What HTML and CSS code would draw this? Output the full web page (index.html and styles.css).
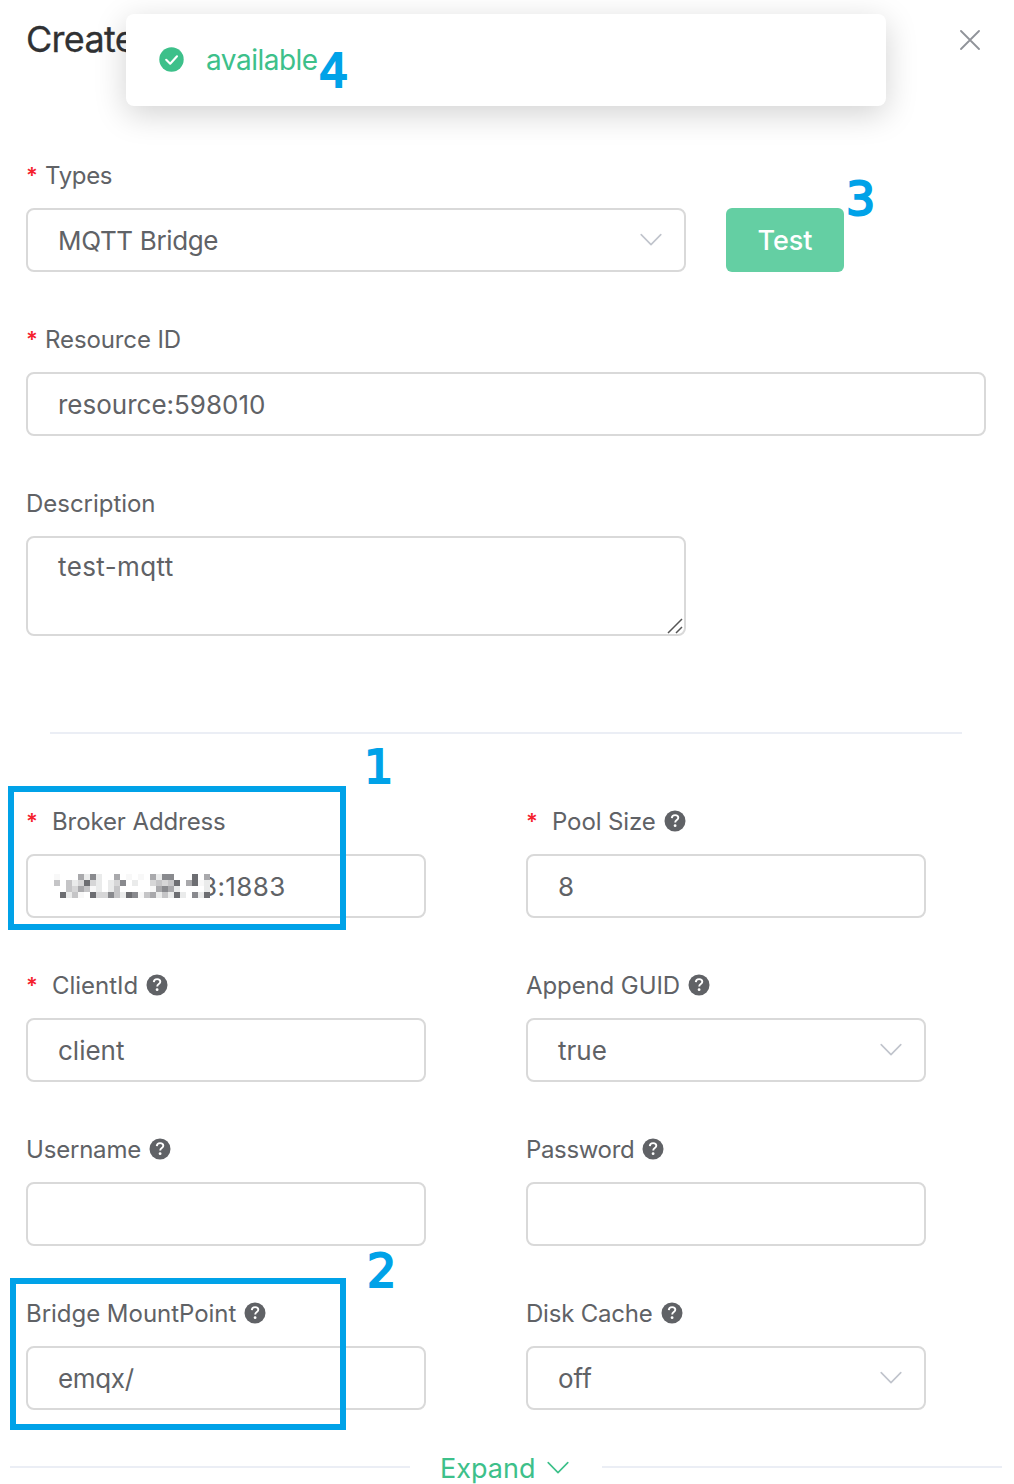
FILE: index.html
```
<!DOCTYPE html>
<html lang="en">
<head>
<meta charset="utf-8">
<title>Create</title>
<link rel="stylesheet" href="styles.css">
</head>
<body>
<svg width="0" height="0" class="defs">
  <defs>
    <symbol id="help" viewBox="0 0 22 22">
      <circle cx="11" cy="11" r="10.5" fill="#606266"/>
      <path d="M7.8 8.1C7.9 6.2 9.2 5.1 11.1 5.1C13 5.1 14.3 6.2 14.3 7.8C14.3 10.2 11.2 10 11.2 12.5" fill="none" stroke="#fff" stroke-width="1.9"/>
      <circle cx="11.1" cy="15.7" r="1.4" fill="#fff"/>
    </symbol>
    <symbol id="chevron" viewBox="0 0 22 14">
      <path d="M1.2 1.6L11 11.6L20.8 1.6" fill="none" stroke="currentColor" stroke-width="1.6" stroke-linecap="round" stroke-linejoin="round"/>
    </symbol>
  </defs>
</svg>
<main class="dialog">
  <header class="header">
    <h1 class="title">Create</h1>
    <svg class="close" viewBox="0 0 20 20"><path d="M1 1L19 19M19 1L1 19" fill="none" stroke="#909399" stroke-width="1.8" stroke-linecap="round"/></svg>
  </header>

  <section class="basics">
    <div class="field">
      <div class="label"><span class="star">*</span><span class="tight">Types</span></div>
      <div class="row">
        <div class="control medium"><span class="tight">MQTT Bridge</span><svg class="arrow"><use href="#chevron"/></svg></div>
        <button class="test">Test</button>
      </div>
    </div>
    <div class="field">
      <div class="label"><span class="star">*</span><span>Resource ID</span></div>
      <div class="control"><span>resource:598010</span></div>
    </div>
    <div class="field">
      <div class="label"><span class="even">Description</span></div>
      <div class="control medium area"><span class="loose">test-mqtt</span>
        <svg class="grip" viewBox="0 0 16 16"><path d="M1 15L15 1M9 15L15 9" stroke="#555" stroke-width="1.5" fill="none"/></svg>
      </div>
    </div>
  </section>

  <hr class="divider">

  <section class="grid">
    <div class="field">
      <div class="label wide"><span class="star">*</span><span>Broker Address</span></div>
      <div class="control address"><span class="loose">3:1883</span>
        <svg class="mosaic" viewBox="0 0 26 4" shape-rendering="crispEdges">
          <path fill="#fff" d="M0 0h26v4H0z"/>
          <path fill="#6d6e72" d="M5 1h1v1h-1zM23 0h1v2h-1zM1 3h1v1h-1zM12 3h1v1h-1zM6 3h1v1h-1zM20 3h1v1h-1zM25 3h1v1h-1zM20 1h1v1h-1z"/>
          <path fill="#898a8e" d="M6 0h1v1h-1zM11 1h1v1h-1zM18 0h2v1h-2zM18 2h1v1h-1zM9 3h1v1h-1zM13 3h1v1h-1zM23 3h1v1h-1z"/>
          <path fill="#a9a9ac" d="M4 0h1v1h-1zM10 0h1v1h-1zM16 0h1v1h-1zM25 0h1v1h-1zM4 2h1v1h-1zM17 2h1v1h-1zM19 2h1v1h-1zM16 3h1v1h-1zM22 1h1v1h-1z"/>
          <path fill="#c5c5c7" d="M0 1h1v1h-1zM17 1h1v1h-1zM19 1h1v1h-1zM5 2h1v1h-1zM10 2h1v1h-1zM3 3h1v1h-1zM10 3h1v1h-1zM15 3h1v1h-1zM18 3h1v1h-1zM2 1h1v2h-1z"/>
          <path fill="#d6d6d7" d="M4 1h1v1h-1zM6 1h1v1h-1zM16 1h1v1h-1zM18 1h1v1h-1zM3 2h1v1h-1zM7 3h2v1h-2zM10 1h1v1h-1z"/>
          <path fill="#eaebeb" d="M5 0h1v1h-1zM7 0h1v3h-1zM17 0h1v1h-1zM3 1h1v1h-1zM9 1h1v2h-1zM13 1h1v1h-1zM25 1h1v2h-1zM20 2h1v1h-1zM2 3h1v1h-1zM11 3h1v1h-1zM17 3h1v1h-1zM19 3h1v1h-1zM21 3h1v1h-1zM24 3h1v1h-1z"/>
          <path fill="#f8f8f8" d="M0 0h1v1h-1zM12 0h1v1h-1zM14 0h1v1h-1zM24 1h1v1h-1zM6 2h1v1h-1zM16 2h1v1h-1zM4 3h1v1h-1zM14 3h1v1h-1z"/>
        </svg>
      </div>
    </div>
    <div class="field">
      <div class="label wide"><span class="star">*</span><span>Pool Size</span><svg class="help"><use href="#help"/></svg></div>
      <div class="control"><span>8</span></div>
    </div>
    <div class="field">
      <div class="label wide"><span class="star">*</span><span class="even">ClientId</span><svg class="help"><use href="#help"/></svg></div>
      <div class="control"><span>client</span></div>
    </div>
    <div class="field">
      <div class="label"><span>Append GUID</span><svg class="help"><use href="#help"/></svg></div>
      <div class="control"><span>true</span><svg class="arrow"><use href="#chevron"/></svg></div>
    </div>
    <div class="field">
      <div class="label"><span class="snug">Username</span><svg class="help"><use href="#help"/></svg></div>
      <div class="control"></div>
    </div>
    <div class="field">
      <div class="label"><span class="tight">Password</span><svg class="help"><use href="#help"/></svg></div>
      <div class="control"></div>
    </div>
    <div class="field">
      <div class="label"><span class="even">Bridge MountPoint</span><svg class="help"><use href="#help"/></svg></div>
      <div class="control"><span class="tight">emqx/</span></div>
    </div>
    <div class="field">
      <div class="label"><span class="snug">Disk Cache</span><svg class="help"><use href="#help"/></svg></div>
      <div class="control"><span>off</span><svg class="arrow"><use href="#chevron"/></svg></div>
    </div>
  </section>

  <div class="expand"><span class="rule"></span><span class="expand-text">Expand</span><svg class="expand-arrow"><use href="#chevron"/></svg><span class="rule"></span></div>

  <div class="toast">
    <svg class="ok" viewBox="0 0 25 25"><circle cx="12.5" cy="12.5" r="12.2" fill="#3dc08a"/><path d="M7.2 12.8L11.2 16.7L18 9.3" fill="none" stroke="#fff" stroke-width="2.1" stroke-linecap="round" stroke-linejoin="round"/></svg>
    <span class="toast-text">available</span>
  </div>

  <div class="mark mark-address"></div>
  <div class="mark mark-mount"></div>
  <span class="num n1">1</span>
  <span class="num n2">2</span>
  <span class="num n3">3</span>
  <span class="num n4">4</span>
</main>
</body>
</html>
```
FILE: styles.css
```
* { box-sizing: border-box; }
body {
  margin: 0;
  background: #fff;
  color: #606266;
  font-family: Inter, "Liberation Sans", sans-serif;
  font-size: 26px;
}
.defs { position: absolute; }
.dialog { position: relative; width: 1014px; height: 1484px; overflow: hidden; }
.header {
  display: flex;
  justify-content: space-between;
  align-items: center;
  height: 80px;
  padding: 0 34px 0 26px;
}
.title { margin: -2px 0 0; font-size: 36px; font-weight: 400; letter-spacing: -.7px; color: #303133; -webkit-text-stroke: .3px #303133; }
.close { width: 20px; height: 20px; }

.basics { display: flex; flex-direction: column; gap: 36px; padding: 64px 28px 0 26px; }
.label { display: flex; align-items: center; height: 64px; padding-bottom: 2px; font-size: 24px; letter-spacing: -.1px; }
.label .even { letter-spacing: -.03px; }
.label .snug { letter-spacing: -.2px; }
.label .tight, .control .tight { letter-spacing: -.35px; }
.loose { letter-spacing: .4px; }
.star { width: 19px; color: #f5222d; font-size: 22px; font-weight: 600; }
.wide .star { width: 26px; }
.help { width: 22px; height: 22px; margin-left: 8px; }
.row { display: flex; gap: 40px; }
.control {
  position: relative;
  display: flex;
  align-items: center;
  justify-content: space-between;
  height: 64px;
  padding: 0 22px 0 30px;
  border: 2px solid #d9d9d9;
  border-radius: 8px;
  background: #fff;
}
.medium { width: 660px; }
.area { height: 100px; align-items: flex-start; padding-top: 13px; }
.grip { position: absolute; right: 1px; bottom: 0; width: 16px; height: 16px; }
.arrow { width: 22px; height: 14px; color: #c0c4cc; margin-top: -1px; }
.test {
  width: 118px;
  height: 64px;
  padding: 0;
  border: 0;
  border-radius: 6px;
  background: #64cfa3;
  color: #fff;
  font: 500 27px Inter, sans-serif;
}
.divider { height: 2px; margin: 96px 52px 0 50px; border: 0; background: #ebeef5; }
.grid { display: grid; grid-template-columns: 400px 400px; gap: 36px 100px; padding: 56px 0 0 26px; }
.address { padding-left: 173px; }
.mosaic { position: absolute; left: 26px; top: 18px; width: 156px; height: 24px; }

.expand { display: flex; align-items: center; height: 40px; margin-top: 37px; padding: 0 12px 0 10px; color: #3dc08a; }
.rule { width: 400px; height: 2px; background: #ebeef5; }
.expand-text { margin: 2px 12px 0 30px; font-size: 27px; }
.expand-arrow { width: 22px; height: 14px; margin: 2px auto 0 0; }

.toast {
  position: absolute;
  left: 126px;
  top: 14px;
  width: 760px;
  height: 92px;
  display: flex;
  align-items: center;
  padding-left: 33px;
  border-radius: 8px;
  background: #fff;
  box-shadow: 0 8px 32px rgba(0, 0, 0, .18);
  color: #3dc08a;
}
.ok { width: 25px; height: 25px; margin-top: -1px; }
.toast-text { margin-left: 22px; font-size: 28px; letter-spacing: -.5px; }

.mark { position: absolute; border: 6px solid #00a2e8; }
.mark-address { left: 8px; top: 786px; width: 338px; height: 144px; }
.mark-mount { left: 10px; top: 1278px; width: 336px; height: 152px; }
.num {
  position: absolute;
  color: #00a2e8;
  font: 46px/50px "DejaVu Sans", sans-serif;
  -webkit-text-stroke: 2.2px #00a2e8;
}
.n1 { left: 364px; top: 742px; }
.n2 { left: 367px; top: 1246px; }
.n3 { left: 846px; top: 174px; }
.n4 { left: 319px; top: 46px; }
```
